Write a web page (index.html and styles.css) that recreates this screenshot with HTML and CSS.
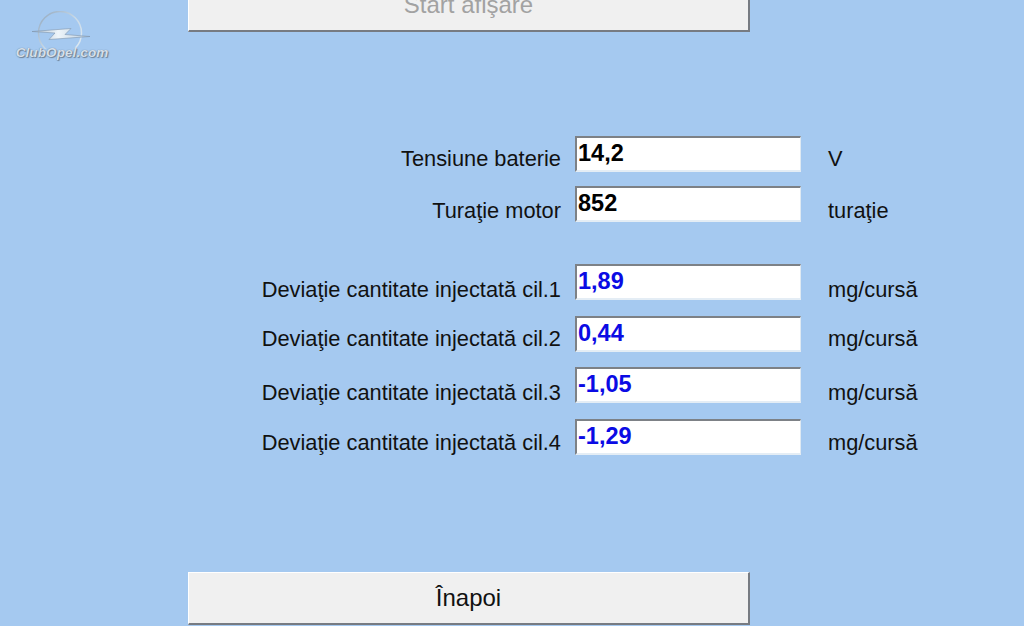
FILE: index.html
```html
<!DOCTYPE html>
<html lang="ro">
<head>
<meta charset="utf-8">
<title>Deviație cantitate injectată</title>
<link rel="stylesheet" href="styles.css">
</head>
<body>
<div class="page">
  <div class="logo">
    <svg class="logo-mark" width="62" height="38" viewBox="30 11 62 38">
      <defs>
        <linearGradient id="ring" x1="0" y1="0" x2="1" y2="1">
          <stop offset="0" stop-color="#8fa5bb"/>
          <stop offset="0.5" stop-color="#c9d9e6"/>
          <stop offset="1" stop-color="#e2edf5"/>
        </linearGradient>
        <linearGradient id="bolt" x1="0" y1="0" x2="1" y2="0">
          <stop offset="0" stop-color="#a9bccd"/>
          <stop offset="0.45" stop-color="#eef5fa"/>
          <stop offset="1" stop-color="#b9cbdb"/>
        </linearGradient>
      </defs>
      <circle cx="60" cy="33" r="21.5" fill="none" stroke="url(#ring)" stroke-width="1.5"/>
      <path d="M32 31.5 L71 28.5 L65 34.5 L90 36.5 L49 39.5 L55 33 Z" fill="url(#bolt)" stroke="#7f96ad" stroke-width="0.6"/>
    </svg>
    <span class="logo-text">ClubOpel.com</span>
  </div>
  <button class="action action-top" disabled>Start afişare</button>
  <div class="fields">
    <div class="group">
      <div class="row row-up"><span class="label">Tensiune baterie</span><span class="value">14,2</span><span class="unit">V</span></div>
      <div class="row row-down"><span class="label">Turaţie motor</span><span class="value">852</span><span class="unit">turaţie</span></div>
    </div>
    <div class="group group-blue">
      <div class="row row-down2"><span class="label">Deviaţie cantitate injectată cil.1</span><span class="value">1,89</span><span class="unit">mg/cursă</span></div>
      <div class="row"><span class="label">Deviaţie cantitate injectată cil.2</span><span class="value">0,44</span><span class="unit">mg/cursă</span></div>
      <div class="row row-down2"><span class="label">Deviaţie cantitate injectată cil.3</span><span class="value">-1,05</span><span class="unit">mg/cursă</span></div>
      <div class="row row-down"><span class="label">Deviaţie cantitate injectată cil.4</span><span class="value">-1,29</span><span class="unit">mg/cursă</span></div>
    </div>
  </div>
  <button class="action action-bottom">Înapoi</button>
</div>
</body>
</html>
```
FILE: styles.css
```css
* { box-sizing: border-box; }
html, body { margin: 0; padding: 0; height: 100%; overflow: hidden; }
body { background: #a5c9f0; font-family: "Liberation Sans", Arial, sans-serif; color: #111; }
.page { position: relative; height: 626px; overflow: hidden; display: flex; flex-direction: column; }

.logo { position: absolute; left: 14px; top: 11px; width: 96px; display: flex; flex-direction: column; align-items: center; }
.logo-mark { display: block; height: 38px; align-self: flex-start; margin-left: 16px; }
.logo-text { font-size: 13.5px; line-height: 13px; margin-top: -3px; font-weight: bold; font-style: italic; color: #d5dfe9; text-shadow: 0 0 1px #5f7388, 1px 1px 1px #6f8296; white-space: nowrap; letter-spacing: 0.1px; }

.action {
  display: block; width: 562px; height: 54px; margin-left: 188px; padding: 0;
  background: #f0f0f0;
  border: 0; border-top: 1px solid #fff; border-left: 1px solid #fff;
  border-right: 2px solid #777b82; border-bottom: 2px solid #777b82;
  font: 24px "Liberation Sans", Arial, sans-serif; color: #111;
}
.action-top { margin-top: -22px; color: #a2a2a2; }
.action-bottom { margin-top: 117px; height: 53px; }

.fields { margin-top: 104px; display: flex; flex-direction: column; gap: 42px; }
.group { display: flex; flex-direction: column; gap: 14px; }
.group-blue { gap: 15.5px; }
.group-blue .value { color: #0b0be4; }

.row { display: flex; align-items: center; height: 36px; }
.label { width: 561px; text-align: right; font-size: 21.8px; line-height: 23px; padding-top: 10px; flex: none; }
.value {
  flex: none; width: 226px; height: 36px; margin-left: 14px; padding: 0 0 0 1px;
  background: #fff;
  border-top: 2px solid #7d8186; border-left: 2px solid #7d8186;
  border-right: 1px solid #dfe9f2; border-bottom: 2px solid #e4edf5;
  font-size: 23.5px; font-weight: bold; line-height: 30px; color: #000;
}
.unit { margin-left: 27px; font-size: 21.8px; line-height: 23px; padding-top: 10px; }
.row-up .label, .row-up .unit { padding-top: 8px; }
.row-down .label, .row-down .unit { padding-top: 12px; }
.row-down2 .label, .row-down2 .unit { padding-top: 14px; }
```
